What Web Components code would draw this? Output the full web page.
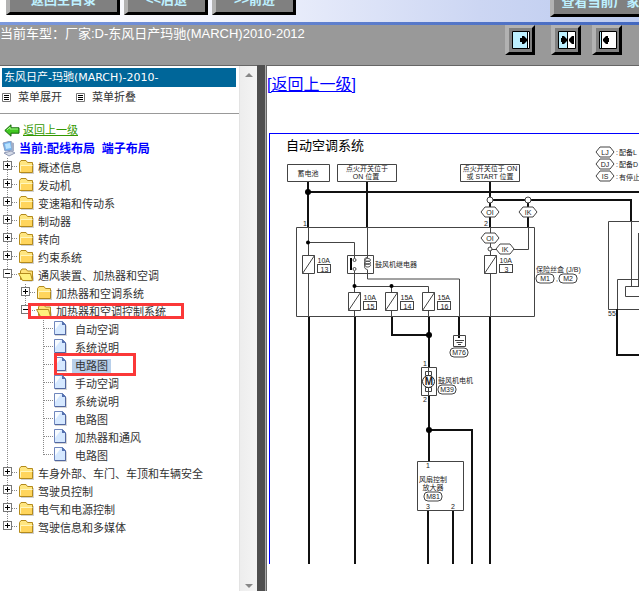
<!DOCTYPE html>
<html lang="zh-CN">
<head>
<meta charset="utf-8">
<title>东风日产-玛驰(MARCH)2010-2012</title>
<style>
html, body { height: 100%; margin: 0; }
body { font-family: "Liberation Sans", "Noto Sans CJK SC", sans-serif; overflow: hidden; background: #fff; }
</style>
</head>
<body>
<manual-app></manual-app>

<script>
const define = (name, html, setup) => {
  const tpl = document.createElement('template');
  tpl.innerHTML = html;
  customElements.define(name, class extends HTMLElement {
    constructor() {
      super();
      this.attachShadow({ mode: 'open' }).append(tpl.content.cloneNode(true));
    }
    connectedCallback() { if (setup) setup(this, this.shadowRoot); }
  });
};

/* Raised grey push button */
define('bevel-button', `
<style>
:host { display: block; flex: none; }
button { box-sizing: border-box; display: flex; align-items: center; justify-content: center; width: 100%; height: 100%;
  margin: 0; padding: 0; background: #808080; border: 4px solid; border-width: 3px 3px 3px 4px;
  border-color: #b2b2b2 #000 #000 #b2b2b2; color: #bdf0ff; font: bold 13px/18px "Liberation Sans", "Noto Sans CJK SC", sans-serif; white-space: nowrap; }
</style>
<button type="button"><slot></slot></button>`, (el, root) => {
  if (el.title) root.querySelector('button').setAttribute('aria-label', el.title);
});

define('top-nav', `
<style>
:host { display: flex; flex: none; align-items: flex-end; gap: 4px; height: 22px; padding-left: 6px; overflow: hidden;
  background: linear-gradient(90deg, #fff 0, #f2f4fd 35%, #ccd6f3 75%, #bccbef 100%); border-bottom: 3px solid #4a6dc4; border-image: linear-gradient(90deg, #7c99dd, #4368c0) 1; }
bevel-button { width: 84px; height: 30px; margin-bottom: 7px; }
.home { width: 114px; }
.maker { width: 100px; margin: 0 -11px 5px auto; }
</style>
<bevel-button class="home">返回主目录</bevel-button>
<bevel-button>&lt;&lt;后退</bevel-button>
<bevel-button>&gt;&gt;前进</bevel-button>
<bevel-button class="maker">查看当前厂家</bevel-button>`);

define('model-bar', `
<style>
:host { display: flex; flex: none; justify-content: space-between; height: 40px; background: #999; border-bottom: 1px solid #666; color: #fff;
  font-size: 13px; line-height: 18px; white-space: nowrap; }
.tools { display: flex; gap: 16px; padding-right: 17px; }
.pair { display: flex; gap: 11px; }
bevel-button { width: 30px; height: 30px; }
svg { display: block; flex: none; }
</style>
<span>当前车型：厂家:D-东风日产玛驰(MARCH)2010-2012</span>
<div class="tools">
  <bevel-button title="展开左栏"><svg width="18" height="18"><path d="M.5.5h17v17H.5z" fill="#fff"/><path d="M1 1h14v16H1z" fill="#bdf0ff"/><path d="M.5.5h17v17H.5zM15.500.5v17" fill="none" stroke="#000"/><path d="M8 7h2V5h2l3 3v2l-3 3h-2v-2H8z"/></svg></bevel-button>
  <div class="pair">
  <bevel-button title="两栏显示"><svg width="18" height="18"><path d="M.5.5h17v17H.5z" fill="#fff"/><path d="M1 1h8v16H1z" fill="#bdf0ff"/><path d="M.5.5h17v17H.5zM9.500.5v17" fill="none" stroke="#000"/><path d="M3 7h1V5h2l3 3v2l-3 3H4v-2H3zM16 5h-2l-3 3v2l3 3h2z"/></svg></bevel-button>
  <bevel-button title="收起左栏"><svg width="18" height="18"><path d="M.5.5h17v17H.5z" fill="#fff"/><path d="M1 1h2v16H1z" fill="#bdf0ff"/><path d="M.5.5h17v17H.5zM2.500.5v17" fill="none" stroke="#000"/><path d="M10 7H9V5H7L4 8v2l3 3h2v-2h1z"/></svg></bevel-button>
  </div>
</div>`);

const ICONS = {
  folder: `<path d="M2 14V4l2-2h4l2 2h5v10z" fill="#999" opacity=".45" transform="translate(1 1)"/><path d="M1.500 13.500v-10l1.500-2h5l1.500 2h5v10z" fill="#ffe680" stroke="#b38a1c"/><path d="M2 6.500h12V13H2z" fill="#ffd55c"/><path d="M2.500 12.500v-6h12" fill="none" stroke="#fff6bd"/>`,
  open: `<path d="M4 15h10l2-7V14z" fill="#999" opacity=".5"/><path d="M2.500 12.500V4l1.500-2h4l1.500 2h5v9z" fill="#ffe27a" stroke="#b38a1c"/><path d="M.5 6.500h12l2 7h-10z" fill="#fff07c" stroke="#b38a1c"/>`,
  page: `<path d="M1 1h8l4 4v10H1z" fill="#999" opacity=".4"/><path d="M.5.5h8l3 3v10H.5z" fill="#d5e8ff" stroke="#6f86bd"/><path d="M1 1h6L1 9z" fill="#f8fcff"/><path d="M8 0l4 4H8z" fill="#5571b0"/><path d="M11.500 4v9.500H1" fill="none" stroke="#5267a0"/>`
};

define('tree-item', `
<style>
:host { display: block; background: repeating-linear-gradient(#888 0 1px, #fff 1px 2px) 7px 0 / 1px 100% no-repeat; }
:host([last]) { background-size: 1px 9px; }
.row { position: relative; display: flex; align-items: center; height: 18px; font-size: 11px; line-height: 14px; white-space: nowrap; color: #333; }
button { box-sizing: border-box; flex: none; width: 9px; height: 9px; margin-left: 3px; padding: 0; border: 1px solid #777; background: #fff; display: block; margin-bottom: 3px; }
button svg { display: block; }
.dots { flex: none; width: 6px; height: 1px; margin-bottom: 2px; background: repeating-linear-gradient(90deg, #888 0 1px, transparent 1px 2px); }
.icon { flex: none; width: 16px; height: 16px; margin-bottom: 1px; }
a { margin: 1px 0 0 2px; padding: 0 2px; color: inherit; text-decoration: none; }
:host([icon="page"]) button { display: none; }
:host([icon="page"]) .dots { margin-left: 8px; width: 10px; }
:host([icon="page"]) a { padding: 0 3px; }
:host([selected]) a { background: #b8cfea; }
.kids { padding-left: 18px; }
.mark { position: absolute; box-sizing: border-box; border: 3px solid #fb3838; display: none; }
:host([mark="branch"]) .mark { display: block; left: 10px; top: 1px; width: 156px; height: 16px; }
:host([mark="leaf"]) .mark { display: block; left: 18px; top: -3px; width: 82px; height: 23px; }
</style>
<div class="row"><button type="button" aria-label="展开或折叠"><svg width="7" height="7"></svg></button><span class="dots"></span><svg class="icon"></svg><a href="#"></a><span class="mark"></span></div>
<div class="kids"><slot></slot></div>`, (el, root) => {
  const open = el.hasAttribute('open');
  root.querySelector('a').textContent = el.getAttribute('label');
  root.querySelector('.icon').innerHTML = ICONS[el.getAttribute('icon') || (open ? 'open' : 'folder')];
  root.querySelector('button svg').innerHTML = `<path d="M1 3.500h5${open ? '' : 'M3.500 1v5'}" stroke="#000"/>`;
});

define('menu-toggle', `
<style>
:host { display: block; }
button { display: flex; align-items: center; gap: 7px; padding: 0; border: 0; background: none; font: 11px/18px "Liberation Sans", "Noto Sans CJK SC", sans-serif; color: #333; }
</style>
<button type="button"><svg width="9" height="9"><path d="M.5.5h8v8h-8z" fill="#fff" stroke="#777"/><path d="M2 2.500h5M2 4.500h5M2 6.500h5" stroke="#000"/></svg><slot></slot></button>`);

define('scroll-rail', `
<style>
:host { display: flex; flex: none; flex-direction: column; justify-content: space-between; align-items: center; width: 18px; padding: 6px 0 2px;
  box-sizing: border-box; border-left: 1px solid #e3e3e3; background: linear-gradient(90deg, #ededed, #f4f4f4); }
svg { display: block; }
</style>
<svg width="8" height="5"><path d="M0 5l4-4 4 4z" fill="#888"/></svg>
<svg width="8" height="5"><path d="M0 0h8L4 4z" fill="#888"/></svg>`);

define('side-tree', `
<style>
:host { display: flex; flex: none; width: 257px; }
nav { flex: 1; min-width: 0; padding-top: 2px; color: #333; font-size: 11px; white-space: nowrap; }
h1 { margin: 0 3px 0 2px; padding: 0 2px; background: #069; color: #fff; font: 11px/19px "DejaVu Sans", "Noto Sans CJK SC", sans-serif; }
.menu { display: flex; align-items: center; gap: 14px; height: 20px; padding-left: 2px; }
hr { margin: 6px 0 7px; border: 0; height: 1px; background: #999; }
.line { display: flex; align-items: center; gap: 3px; height: 18px; padding-left: 4px; }
.line svg { flex: none; }
.back { color: #390; line-height: 13px; text-decoration: underline; }
.now { gap: 2px; height: 19px; padding-left: 2px; color: #00f; font: bold 12px/16px "Liberation Sans", "Noto Sans CJK SC", sans-serif; }
.now span { white-space: pre; }
</style>
<nav>
<h1>东风日产-玛驰(MARCH)-2010-</h1>
<div class="menu"><menu-toggle>菜单展开</menu-toggle><menu-toggle>菜单折叠</menu-toggle></div>
<hr>
<div class="line"><svg width="16" height="13"><path d="M.8 6.500L7 .8v3h8v5.400H7v3z" fill="#42c822" stroke="#166b0a"/><path d="M3 6l3-3v2h8" fill="none" stroke="#a4f08c"/></svg><a class="back" href="#">返回上一级</a></div>
<div class="line now"><svg width="15" height="16"><path d="M1 2l8-2 2 9-8 1z" fill="#74b4ee" stroke="#8b9bc0"/><path d="M3 3l5-1 1 5-5 1z" fill="#b8e2ff"/><path d="M9 1l3 1v8l-2 1z" fill="#a4afc6"/><path d="M2 12l7-2 4 2-6 3z" fill="#d4d9e5" stroke="#8e98b4"/></svg><span>当前:配线布局  端子布局</span></div>
<tree-item label="概述信息"></tree-item>
<tree-item label="发动机"></tree-item>
<tree-item label="变速箱和传动系"></tree-item>
<tree-item label="制动器"></tree-item>
<tree-item label="转向"></tree-item>
<tree-item label="约束系统"></tree-item>
<tree-item label="通风装置、加热器和空调" open>
  <tree-item label="加热器和空调系统"></tree-item>
  <tree-item label="加热器和空调控制系统" open last mark="branch">
    <tree-item icon="page" label="自动空调"></tree-item>
    <tree-item icon="page" label="系统说明"></tree-item>
    <tree-item icon="page" label="电路图" selected mark="leaf"></tree-item>
    <tree-item icon="page" label="手动空调"></tree-item>
    <tree-item icon="page" label="系统说明"></tree-item>
    <tree-item icon="page" label="电路图"></tree-item>
    <tree-item icon="page" label="加热器和通风"></tree-item>
    <tree-item icon="page" label="电路图" last></tree-item>
  </tree-item>
</tree-item>
<tree-item label="车身外部、车门、车顶和车辆安全"></tree-item>
<tree-item label="驾驶员控制"></tree-item>
<tree-item label="电气和电源控制"></tree-item>
<tree-item label="驾驶信息和多媒体" last></tree-item>
</nav>
<scroll-rail></scroll-rail>`);

/* Wiring diagram symbols */
const txt = (x, y, s, cls = '') => `<text x="${x}" y="${y}" class="${cls}">${s}</text>`;
const hex = (x, y, s) => `<path class="f" d="M${x - 9} ${y}l4-5h10l4 5-4 5h-10z"/>` + txt(x, y + 3, s, 'm');
const pill = (x, y, s) => `<rect class="f" x="${x - 9}" y="${y - 4}" width="18" height="9" rx="4"/>` + txt(x, y + 3, s, 'm');
const fuse = (x, y, amp, n) => `<path class="f" d="M${x - 6} ${y}h12v18h-12zM${x - 6} ${y + 18}l12 -18"/>` + txt(x + 9, y + 7, amp) +
  `<rect class="f" x="${x + 9}" y="${y + 9}" width="13" height="8"/>` + txt(x + 16, y + 16, n, 'm');
const dot = (x, y, r) => `<circle cx="${x}" cy="${y}" r="${r}"/>`;
const ring = (x, y, r) => `<circle class="f" cx="${x}" cy="${y}" r="${r}"/>`;

define('circuit-diagram', `
<style>
:host { display: block; }
svg { display: block; }
text { font: 7px "Liberation Sans", "Noto Sans CJK SC", sans-serif; fill: #222; }
.m { text-anchor: middle; }
.t { font-size: 13px; fill: #000; }
.b { font-size: 10px; font-weight: bold; }
.n { fill: none; stroke: #444; stroke-width: 1; }
.f { fill: #fff; stroke: #444; stroke-width: 1; }
.w { fill: none; stroke: #111; stroke-width: 2; }
</style>
<svg width="369" height="430" viewBox="270 134 369 430" role="img" aria-label="自动空调系统">
${txt(286, 150, '自动空调系统', 't')}
<path class="n" d="M296.500 227.500h238v89h-238zM608.500 309.500V221.500h40M608.500 309.500h40M308.500 227v90M308.500 242.500h46v50M367.500 227v52h92v38M354.500 286.500h74v30M391.500 286v30M490.500 227v90M528.500 227v22.500h-38M617.500 309.500v-30h30M631.500 221v65M638.500 233v53M428.500 367v28M354.500 292v24"/>
<path class="w" d="M308 181v46M308.500 192h340M367 181v46M490 181v46M490 200h141v21M528 200v27M309 317v247M355 317v247M392 317v18h36M429 317v50M459 317v21M490 317v247M429 395v66M429 430h43v134M428 510v54M453 510v54M617 309v46h30"/>
<path class="f" d="M287.500 164.500h42v17h-42zM337.500 164.500h59v17h-59zM460.500 164.500h59v17h-59z"/>
${txt(308, 176, '蓄电池', 'm')}${txt(367, 171, '点火开关位于', 'm')}${txt(366, 179, 'ON 位置', 'm')}
${txt(490, 171, '点火开关位于 ON', 'm')}${txt(490, 179, '或 START 位置', 'm')}
${dot(308, 192, 3)}${ring(490, 200, 3)}${ring(528, 200, 3)}
${hex(490, 212, 'OI')}${hex(528, 212, 'IK')}${hex(490, 238, 'OI')}${ring(490, 249, 2)}${hex(505, 249, 'IK')}
${txt(303, 226, '1')}${txt(484, 226, '2')}
${dot(308, 242.500, 2)}${dot(354.500, 286, 2)}${dot(391.500, 286, 2)}${dot(429, 335, 3)}${dot(429, 430, 3)}
${fuse(308.500, 255.500, '10A', '13')}${fuse(490.500, 255.500, '10A', '3')}
${fuse(354.500, 292.500, '10A', '15')}${fuse(391.500, 292.500, '15A', '14')}${fuse(428.500, 292.500, '15A', '16')}
<path class="f" d="M347.500 255.500h26v18h-26z"/>
<path class="n" d="M354.500 255v3M354.500 271v3M367.500 255v3M367.500 270v4"/>
<path d="M350 258h2v12h-2z"/>
${ring(354.500, 260, 1.500)}${ring(354.500, 269, 1.500)}
<path class="n" d="M367.500 257.500c-4 0-4 4 0 4s4-3 0-3-4 6 0 6 4-3.500 0-3.500-4 6 0 6 4-3.500 0-3.500-4 6 0 6"/>
${txt(375, 267, '鼓风机继电器')}
${txt(536, 272, '保险丝盒 (J/B)')}${pill(545, 278, 'M1')}${txt(556, 281, ',')}${pill(568, 278, 'M2')}
<path class="n" d="M453.500 335.500h12v11h-12zM455 340.500h9M456.500 342.500h6M458 344.500h3"/>${pill(459, 352, 'M76')}
<path class="f" d="M421.500 367.500h15v28h-15z"/><path class="n" d="M428.500 367v28M425.500 371.500h6v4h-6zM425.500 387.500h6v4h-6z"/>
<circle cx="428.500" cy="381.500" r="6" fill="#fff" stroke="#222"/>${txt(429, 385, 'M', 'm b')}
${txt(423, 366, '1')}${txt(423, 402, '2')}${txt(438, 383, '鼓风机电机')}${pill(447, 389, 'M39')}
<path class="f" d="M417.500 461.500h46v49h-46z"/>
${txt(428, 468, '1', 'm')}${txt(433, 482, '风扇控制', 'm')}${txt(433, 490, '放大器', 'm')}${pill(433, 496, 'M81')}${txt(428, 509, '3', 'm')}${txt(453, 509, '2', 'm')}
<path class="f" d="M625.500 286.500h20v10h-20z"/>${txt(608, 316, '55')}
${hex(605, 152, 'LJ')}${hex(605, 164, 'DJ')}${hex(605, 176, 'IS')}
${txt(616, 155, ':')}${txt(619, 155, '配备L')}${txt(616, 167, ':')}${txt(619, 167, '配备D')}${txt(616, 179, ':')}${txt(619, 180, '有停止')}
</svg>`);

define('content-pane', `
<style>
:host { display: block; flex: 1; min-width: 0; overflow: hidden; border-left: 1px solid #666; background: #fff; }
.back { display: inline-block; margin: 9px 0 0; font-size: 16px; line-height: 20px; color: #00f; }
.figure { display: block; margin: 38px 0 0 2px; border: solid #00f; border-width: 1px 0 0 1px; }
</style>
<a class="back" href="#">[返回上一级]</a>
<a class="figure" href="#"><circuit-diagram></circuit-diagram></a>`);

define('manual-app', `
<style>
:host { display: flex; flex-direction: column; height: 100vh; overflow: hidden; }
main { display: flex; flex: 1; min-height: 0; }
.splitter { flex: none; width: 8px; margin-top: -1px; background: #4f4f4f; border-right: 1px solid #aaa; }
</style>
<top-nav></top-nav>
<model-bar></model-bar>
<main>
  <side-tree></side-tree>
  <div class="splitter"></div>
  <content-pane></content-pane>
</main>`);
</script>
</body>
</html>
